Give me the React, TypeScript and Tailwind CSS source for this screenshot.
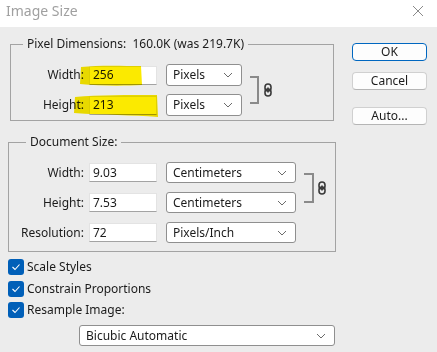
import React from 'react';

const font = { fontFamily: '"Noto Sans", "Open Sans", Arial, sans-serif' };

const Chevron = () => (
  <svg width="10" height="6" viewBox="0 0 10 6" className="shrink-0">
    <path d="M1 1 L5 5 L9 1" fill="none" stroke="#6b6b6b" strokeWidth="1" />
  </svg>
);

const Select: React.FC<{ value: string; w: string; h: string; className?: string }> = ({ value, w, h, className = '' }) => (
  <div
    className={`${w} ${h} ${className} flex items-center justify-between rounded-[3px] border border-[#8f8f8f] bg-white pl-[6px] pr-[8px] text-[12px] text-[#1b1b1b]`}
  >
    <span>{value}</span>
    <Chevron />
  </div>
);

const Input: React.FC<{ value: string }> = ({ value }) => (
  <div className="ml-[5px] flex h-[19px] w-[68px] items-center border border-[#e3e3e3] border-b-[#a3a3a3] bg-white pl-[3px] text-[12px] text-[#1b1b1b]">
    {value}
  </div>
);

const Chain = () => (
  <svg width="8" height="14" viewBox="0 0 8 14">
    <rect x="1" y="1" width="6" height="7" rx="3" fill="none" stroke="#3a3a3a" strokeWidth="1.6" />
    <rect x="1" y="6" width="6" height="7" rx="3" fill="none" stroke="#3a3a3a" strokeWidth="1.6" />
    <line x1="4" y1="4.5" x2="4" y2="9.5" stroke="#3a3a3a" strokeWidth="1.6" />
  </svg>
);

const Check: React.FC<{ label: string }> = ({ label }) => (
  <div className="flex h-[16px] items-center">
    <div className="flex h-[16px] w-[16px] items-center justify-center rounded-[3px] bg-[#005fb8]">
      <svg width="10" height="8" viewBox="0 0 10 8">
        <path d="M1.5 4 L4 6.5 L8.5 1.5" fill="none" stroke="white" strokeWidth="1.1" />
      </svg>
    </div>
    <span className="ml-[3px] text-[12px] text-[#1b1b1b]">{label}</span>
  </div>
);

const Button: React.FC<{ label: string; primary?: boolean; className?: string }> = ({ label, primary, className = '' }) => (
  <div
    className={`${className} flex h-[18px] w-[75px] items-center justify-center rounded-[4px] border bg-[#fdfdfd] text-[12px] text-[#1b1b1b] ${
      primary ? 'border-[#0067c0]' : 'border-[#d0d0d0] border-b-[#b5b5b5]'
    }`}
  >
    {label}
  </div>
);

export default function App() {
  return (
    <div className="h-[352px] w-[437px] overflow-hidden bg-[#ececec]" style={font}>
      {/* title bar */}
      <div className="flex h-[27px] items-start justify-between bg-white pl-[6px] pr-[13px]">
        <span className="mt-[2px] text-[14px] leading-[18px] text-[#a0a0a0]">Image Size</span>
        <svg className="mt-[5px]" width="12" height="12" viewBox="0 0 12 12">
          <path d="M1 1 L11 11 M11 1 L1 11" stroke="#8a8a8a" strokeWidth="1" />
        </svg>
      </div>

      <div className="flex pt-[9px]">
        <div className="w-[336px] pl-[8px]">
          {/* Pixel Dimensions */}
          <fieldset className="ml-[2px] w-[324px] border border-[#a3a3a3] pb-[4px]">
            <legend className="ml-[12px] px-[4px] text-[12px] leading-[16px] whitespace-pre text-[#1b1b1b]">
              Pixel Dimensions:  160.0K (was 219.7K)
            </legend>
            <div className="flex items-center pt-[12px]">
              <div className="flex flex-col gap-[8px]">
                <div className="relative flex h-[22px] items-center">
                  <span className="w-[73px] text-right text-[12px] text-[#1b1b1b]">Width:</span>
                  <Input value="256" />
                  <Select value="Pixels" w="w-[76px]" h="h-[22px]" className="ml-[9px]" />
                  <svg
                    className="pointer-events-none absolute left-[68px] top-[0px] mix-blend-multiply"
                    width="64"
                    height="23"
                    viewBox="0 0 64 23"
                  >
                    <path d="M2 3 C20 1 45 2 62 2 L63 21 C45 22 20 22 1 20 Z" fill="#fbea00" />
                  </svg>
                </div>
                <div className="relative flex h-[22px] items-center">
                  <span className="w-[73px] text-right text-[12px] text-[#1b1b1b]">Height:</span>
                  <Input value="213" />
                  <Select value="Pixels" w="w-[76px]" h="h-[22px]" className="ml-[9px]" />
                  <svg
                    className="pointer-events-none absolute left-[62px] top-[0px] mix-blend-multiply"
                    width="86"
                    height="24"
                    viewBox="0 0 86 24"
                  >
                    <path d="M2 3 C25 1 55 1 84 1 L85 23 C60 21 30 21 1 19 Z" fill="#fbea00" />
                  </svg>
                </div>
              </div>
              <div className="ml-[8px] h-[28px] w-[9px] border-y-2 border-r-2 border-[#8a8a8a]" />
              <div className="ml-[5px]">
                <Chain />
              </div>
            </div>
          </fieldset>

          {/* Document Size */}
          <fieldset className="mt-[13px] w-[328px] border border-[#a3a3a3] pb-[8px]">
            <legend className="ml-[17px] px-[4px] text-[12px] leading-[16px] text-[#1b1b1b]">Document Size:</legend>
            <div className="grid grid-cols-[75px_73px_139px_auto] gap-y-[9px] pt-[12px]">
              <span className="flex h-[21px] items-center justify-end text-[12px] text-[#1b1b1b]">Width:</span>
              <div className="flex items-center">
                <Input value="9.03" />
              </div>
              <Select value="Centimeters" w="w-[130px]" h="h-[21px]" className="ml-[9px]" />
              <div className="row-span-2 flex items-center">
                <div className="ml-[8px] h-[30px] w-[10px] border-y-2 border-r-2 border-[#8a8a8a]" />
                <div className="ml-[4px]">
                  <Chain />
                </div>
              </div>
              <span className="flex h-[21px] items-center justify-end text-[12px] text-[#1b1b1b]">Height:</span>
              <div className="flex items-center">
                <Input value="7.53" />
              </div>
              <Select value="Centimeters" w="w-[130px]" h="h-[21px]" className="ml-[9px]" />
              <span className="flex h-[21px] items-center justify-end text-[12px] text-[#1b1b1b]">Resolution:</span>
              <div className="flex items-center">
                <Input value="72" />
              </div>
              <Select value="Pixels/Inch" w="w-[130px]" h="h-[21px]" className="ml-[9px]" />
            </div>
          </fieldset>

          <div className="mt-[7px] flex flex-col gap-[5.5px]">
            <Check label="Scale Styles" />
            <Check label="Constrain Proportions" />
            <Check label="Resample Image:" />
          </div>

          <Select value="Bicubic Automatic" w="w-[256px]" h="h-[21px]" className="ml-[71px] mt-[7px]" />
        </div>

        <div className="ml-[16px] flex flex-col pt-[7px]">
          <Button label="OK" primary />
          <Button label="Cancel" className="mt-[11px]" />
          <Button label="Auto..." className="mt-[17px]" />
        </div>
      </div>
    </div>
  );
}
